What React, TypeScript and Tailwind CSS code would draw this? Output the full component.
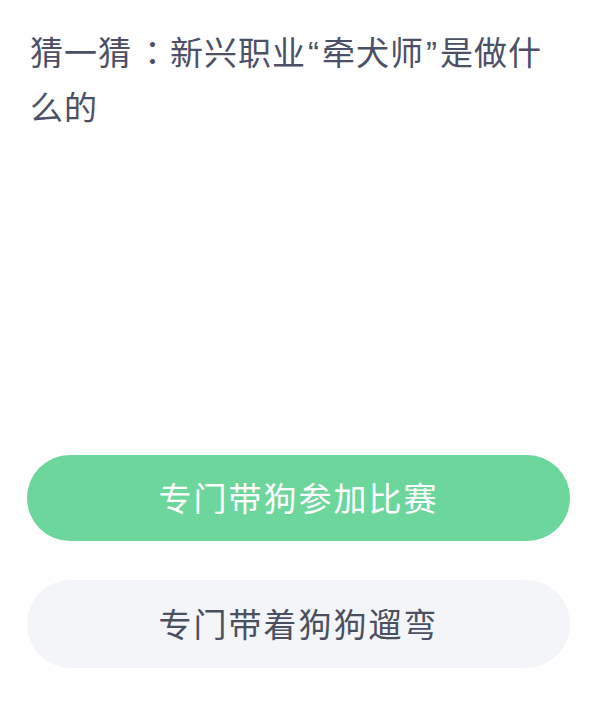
import React from 'react';

const App: React.FC = () => {
    const font = { fontFamily: '"Noto Sans CJK SC", "Noto Sans", sans-serif' };

    return (
        <div className="w-[611px] h-[725px] bg-white overflow-hidden" style={font}>
            {/* Question */}
            <div className="px-[30px] pt-[25px] text-[33px] leading-[53px] tracking-[1px] text-[#4b5066]">
                <span className="block whitespace-nowrap">
                    猜一猜<span className="ml-[4px] font-['Noto_Sans_CJK_TC',sans-serif]">：</span>新兴职业<span className="mx-[2px] font-['Liberation_Sans',sans-serif]">“</span>牵犬师<span className="mx-[2px] font-['Liberation_Sans',sans-serif]">”</span>是做什
                </span>
                <span className="block whitespace-nowrap">么的</span>
            </div>

            {/* Options */}
            <div className="mt-[322px] pl-[27px] pr-[41px] flex flex-col gap-[39px]">
                <button className="h-[86px] w-full rounded-full bg-[#6dd69c] text-white text-[33px] tracking-[2px]">
                    专门带狗参加比赛
                </button>
                <button className="h-[88px] w-full rounded-full bg-[#f3f5f8] text-[#4b5060] text-[33px] tracking-[2px]">
                    专门带着狗狗遛弯
                </button>
            </div>
        </div>
    );
};

export default App;
